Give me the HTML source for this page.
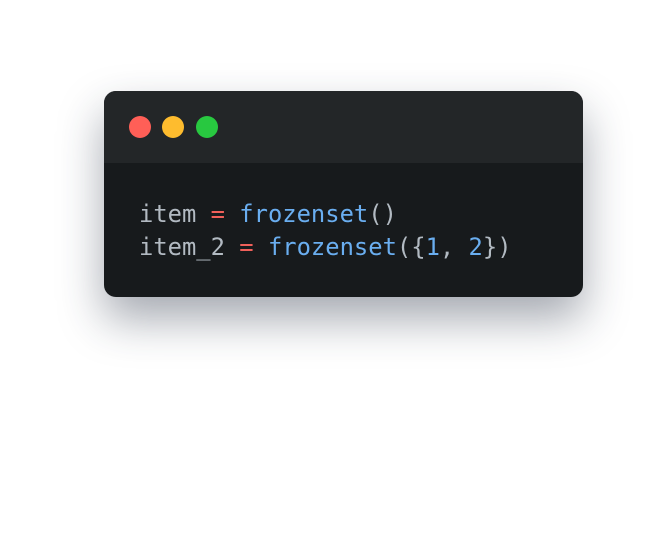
<!DOCTYPE html>
<html><head><style>
body{margin:0;width:672px;height:541px;background:#fff;position:relative;overflow:hidden}
.card{position:absolute;left:104px;top:91px;width:479px;height:206px;border-radius:12px;background:#171a1c;overflow:hidden;box-shadow:0 22px 45px rgba(30,40,60,0.4)}
.hd{height:72px;background:#232628;position:relative}
.d{position:absolute;top:25px;width:22px;height:22px;border-radius:50%}
pre{margin:0;position:absolute;left:35px;top:107px;font-family:"DejaVu Sans Mono","Liberation Mono",monospace;font-size:23.8px;line-height:33px;color:#b2bac2}
.o{color:#f0605a}.f{color:#6aaef0}
</style></head><body>
<div class="card"><div class="hd">
<div class="d" style="left:25px;background:#ff5f57"></div>
<div class="d" style="left:58px;background:#febc2e"></div>
<div class="d" style="left:92px;background:#28c840"></div>
</div></div>
<pre style="position:absolute;left:139px;top:198px">item <span class="o">=</span> <span class="f">frozenset</span>()
item_2 <span class="o">=</span> <span class="f">frozenset</span>({<span class="f">1</span>, <span class="f">2</span>})</pre>
</body></html>
